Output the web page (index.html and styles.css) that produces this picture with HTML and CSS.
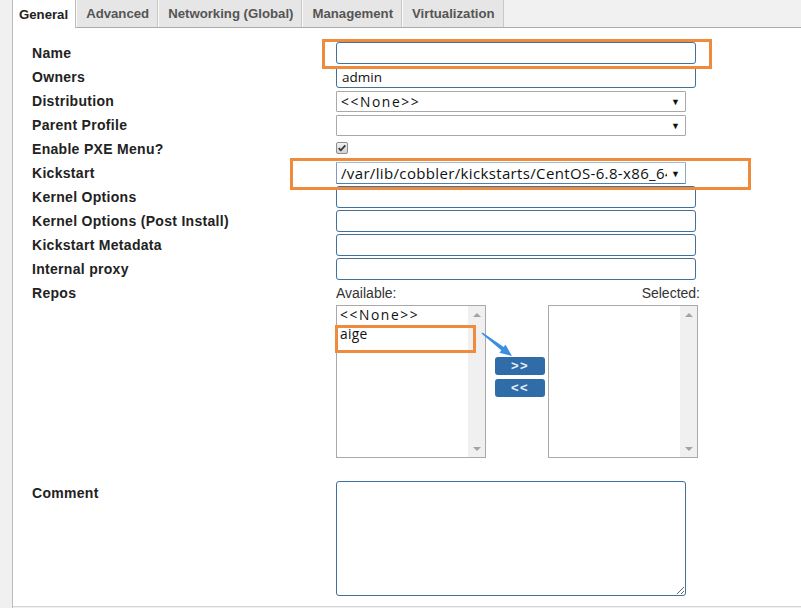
FILE: index.html
```html
<!DOCTYPE html>
<html lang="en">
<head>
<meta charset="utf-8">
<title>Profile – General</title>
<link rel="stylesheet" href="styles.css">
</head>
<body>
<div class="page">
  <div class="side"></div>
  <div class="main">
    <nav class="tabs">
      <span class="tab active">General</span>
      <span class="tab">Advanced</span>
      <span class="tab">Networking (Global)</span>
      <span class="tab">Management</span>
      <span class="tab">Virtualization</span>
    </nav>
    <form class="form">
      <div class="row"><label class="lbl">Name</label><div class="field"><input class="text" type="text"></div></div>
      <div class="row"><label class="lbl">Owners</label><div class="field"><input class="text" type="text" value="admin"></div></div>
      <div class="row"><label class="lbl">Distribution</label><div class="field"><div class="sel"><span class="sel-val none">&lt;&lt;None&gt;&gt;</span><span class="sel-arrow">&#9660;</span></div></div></div>
      <div class="row"><label class="lbl">Parent Profile</label><div class="field"><div class="sel"><span class="sel-val"></span><span class="sel-arrow">&#9660;</span></div></div></div>
      <div class="row"><label class="lbl">Enable PXE Menu?</label><div class="field"><span class="check"><svg viewBox="0 0 12 12" width="10" height="10"><path d="M2 6.2 L4.6 8.8 L10 2.8" fill="none" stroke="#333" stroke-width="2"/></svg></span></div></div>
      <div class="row"><label class="lbl">Kickstart</label><div class="field"><div class="sel sel-focus"><span class="sel-val">/var/lib/cobbler/kickstarts/CentOS-6.8-x86_64.cfg</span><span class="sel-arrow">&#9660;</span></div></div></div>
      <div class="row"><label class="lbl">Kernel Options</label><div class="field"><input class="text" type="text"></div></div>
      <div class="row"><label class="lbl">Kernel Options (Post Install)</label><div class="field"><input class="text" type="text"></div></div>
      <div class="row"><label class="lbl">Kickstart Metadata</label><div class="field"><input class="text" type="text"></div></div>
      <div class="row"><label class="lbl">Internal proxy</label><div class="field"><input class="text" type="text"></div></div>
      <div class="row row-top"><label class="lbl">Repos</label>
        <div class="repos">
          <div class="repos-head"><span>Available:</span><span>Selected:</span></div>
          <div class="repos-body">
            <div class="list">
              <div class="list-items">
                <div class="item none">&lt;&lt;None&gt;&gt;</div>
                <div class="item">aige</div>
              </div>
              <div class="scroll"><span class="up"></span><span class="down"></span></div>
            </div>
            <div class="movers">
              <button type="button" class="btn">&gt;&gt;</button>
              <button type="button" class="btn">&lt;&lt;</button>
            </div>
            <div class="list">
              <div class="list-items"></div>
              <div class="scroll"><span class="up"></span><span class="down"></span></div>
            </div>
          </div>
        </div>
      </div>
      <div class="row row-top row-comment"><label class="lbl">Comment</label><div class="field"><textarea class="area"></textarea></div></div>
    </form>
  </div>

  <div class="mark mark-name"></div>
  <div class="mark mark-kick"></div>
  <div class="mark mark-aige"></div>
  <svg class="pointer" width="40" height="32" viewBox="0 0 40 32">
    <polygon points="4.5,4.4 25.7,19.1 27.55,16.75 34,28 21.45,24.65 23.3,22.3 3.5,5.6" fill="#3a8fe2"/>
  </svg>
</div>
</body>
</html>
```

FILE: styles.css
```css
* { box-sizing: border-box; }

html, body {
  margin: 0;
  padding: 0;
  background: #ffffff;
}

.page {
  position: relative;
  display: flex;
  width: 801px;
  height: 608px;
  background: #f0f0f0;
  overflow: hidden;
  font-family: "Liberation Sans", Arial, sans-serif;
  color: #222;
}

.side {
  width: 13px;
  flex: none;
  background: #f0f0f0;
  border-right: 1px solid #bdbdbd;
}

.main {
  flex: 1;
  display: flex;
  flex-direction: column;
  height: 607px;
  background: #fff;
  border-bottom: 1px solid #d6d6d6;
}

/* tabs */
.tabs {
  display: flex;
  height: 28px;
  flex: none;
  background: #f1f1f1;
  border-bottom: 1px solid #ababab;
}

.tab {
  display: flex;
  align-items: center;
  height: 27px;
  padding: 0 8px 0 9px;
  font-size: 13.2px;
  font-weight: bold;
  color: #555;
  background: #e6e6e6;
  border-left: 1px solid #fafafa;
  border-right: 1px solid #c9c9c9;
  white-space: nowrap;
}

.tab.active {
  height: 28px;
  padding: 0 7px 0 6px;
  color: #222;
  background: #fff;
  border-left: none;
  border-right: 1px solid #bdbdbd;
  margin-bottom: -1px;
}

/* form */
.form {
  margin: 0;
  padding: 13px 0 10px 19px;
  display: flex;
  flex-direction: column;
}

.row {
  display: grid;
  grid-template-columns: 304px 1fr;
  align-items: center;
  height: 24px;
}

.row-top {
  align-items: start;
  height: auto;
}

.row-top .lbl {
  height: 24px;
  display: flex;
  align-items: center;
}

.row-comment {
  margin-top: 23px;
}

.lbl {
  font-size: 14px;
  font-weight: bold;
  letter-spacing: 0.3px;
  color: #222;
}

.field {
  display: flex;
  align-items: center;
}

.text {
  width: 360px;
  height: 22px;
  margin: 0;
  padding: 0 5px;
  border: 1px solid #41709c;
  border-radius: 3px;
  font-family: "Open Sans", "Segoe UI", sans-serif;
  font-size: 13.5px;
  color: #111;
  background: #fff;
  outline: none;
}

.sel {
  display: flex;
  align-items: center;
  width: 350px;
  height: 21px;
  border: 1px solid #a9a9a9;
  border-radius: 1px;
  background: #fff;
  font-family: "Open Sans", "Segoe UI", sans-serif;
  font-size: 13.8px;
  color: #111;
  overflow: hidden;
}

.sel-focus {
  height: 22px;
  font-size: 15px;
  border-color: #a9b9cc #8ea7c2 #4f7fb0 #7d9dbf;
}

.sel-val {
  flex: 1;
  min-width: 0;
  padding-left: 4px;
  white-space: nowrap;
  overflow: hidden;
  letter-spacing: 0.35px;
}

.none {
  letter-spacing: 1.6px;
}

.sel-arrow {
  flex: none;
  width: 18px;
  padding-left: 4px;
  font-size: 9px;
  color: #111;
  background: #fff;
}

.check {
  display: flex;
  align-items: center;
  justify-content: center;
  width: 12px;
  height: 12px;
  margin-top: -2px;
  border: 1px solid #8d8d8d;
  border-radius: 2px;
  background: linear-gradient(#f2f2f2, #d2d2d2);
}

/* repos */
.repos {
  width: 364px;
  display: flex;
  flex-direction: column;
}

.repos-head {
  display: flex;
  justify-content: space-between;
  align-items: center;
  height: 24px;
  font-size: 14px;
  color: #333;
}

.repos-body {
  display: flex;
}

.list {
  display: flex;
  width: 150px;
  height: 153px;
  border: 1px solid #a9a9a9;
  background: #fff;
}

.list-items {
  flex: 1;
  padding: 0 0 0 3px;
  font-family: "Open Sans", "Segoe UI", sans-serif;
  font-size: 13.8px;
  line-height: 18.5px;
  color: #111;
}

.item {
  letter-spacing: 0.3px;
}

.item.none {
  letter-spacing: 1.6px;
}

.scroll {
  position: relative;
  width: 17px;
  background: #f0f0f0;
  display: flex;
  flex-direction: column;
  justify-content: space-between;
  align-items: center;
  padding: 7px 0 6px;
}

.up, .down {
  width: 0;
  height: 0;
  border-left: 4px solid transparent;
  border-right: 4px solid transparent;
}

.up { border-bottom: 4px solid #a3a3a3; }
.down { border-top: 4px solid #a3a3a3; }

.movers {
  width: 62px;
  display: flex;
  flex-direction: column;
  gap: 4px;
  padding: 52px 0 0 9px;
}

.btn {
  width: 50px;
  height: 18px;
  margin: 0;
  padding: 0;
  border: none;
  border-radius: 3px;
  background: #2f6ca8;
  color: #e8f0fa;
  font-family: "Liberation Sans", Arial, sans-serif;
  font-size: 13px;
  font-weight: bold;
  letter-spacing: 1.5px;
  line-height: 18px;
}

.area {
  width: 350px;
  height: 115px;
  margin: 0;
  border: 1px solid #41709c;
  border-radius: 3px;
  background: #fff;
  outline: none;
}

/* annotations drawn over the screenshot */
.mark {
  position: absolute;
  border: 3px solid #ee8b3c;
  pointer-events: none;
}

.mark-name { left: 322px; top: 39px; width: 390px; height: 30px; }
.mark-kick { left: 290px; top: 158px; width: 461px; height: 32px; }
.mark-aige { left: 335px; top: 325px; width: 141px; height: 28px; }

.pointer {
  position: absolute;
  left: 478px;
  top: 328px;
}
```
